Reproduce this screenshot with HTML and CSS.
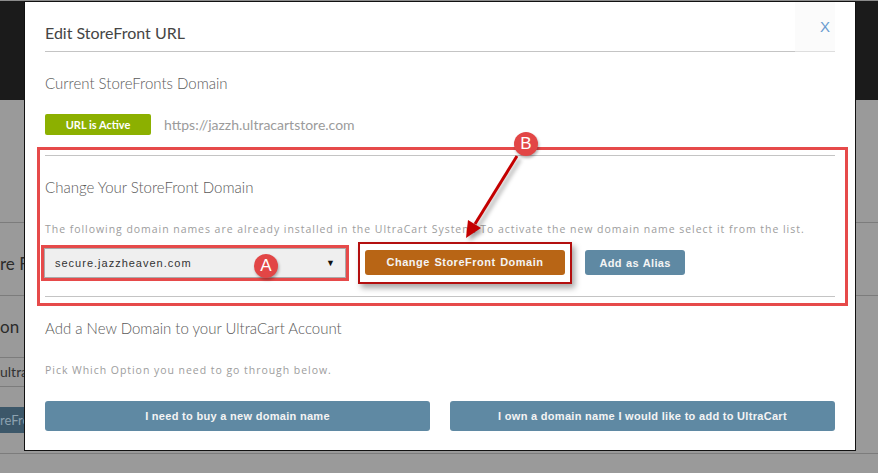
FILE: index.html
```html
<!DOCTYPE html>
<html lang="en">
<head>
    <meta charset="UTF-8">
    <meta name="viewport" content="width=device-width, initial-scale=1.0">
    <link rel="stylesheet" href="styles.css">
    <title>Edit StoreFront URL</title>
</head>
<body>
    <!-- page behind the dialog -->
    <div class="page">
        <div class="topbar"></div>
        <div class="row row-top"></div>
        <div class="row row-label"><span>re F</span></div>
        <div class="row row-title"><span>on</span></div>
        <div class="row row-input"><span class="fake-input">ultra</span></div>
        <div class="row row-action"><span class="fake-btn">reFro</span></div>
    </div>

    <div class="modal">
        <div class="modal-header">
            <h2 class="modal-title">Edit StoreFront URL</h2>
            <button class="close">X</button>
        </div>

        <div class="section">
            <h3>Current StoreFronts Domain</h3>
            <div class="url-row">
                <span class="status">URL is Active</span>
                <span class="url">https://jazzh.ultracartstore.com</span>
            </div>
        </div>

        <div class="highlight">
            <div class="section change">
                <h3>Change Your StoreFront Domain</h3>
                <p class="hint">The following domain names are already installed in the UltraCart System. To activate the new domain name select it from the list.</p>
                <div class="domain-row">
                    <div class="mark mark-a">
                        <div class="select">
                            <span>secure.jazzheaven.com</span>
                            <span class="caret">&#9660;</span>
                        </div>
                        <span class="pin pin-a">A</span>
                    </div>
                    <div class="mark mark-b">
                        <button class="btn btn-orange">Change StoreFront Domain</button>
                    </div>
                    <button class="btn btn-blue btn-alias">Add as Alias</button>
                </div>
            </div>
        </div>

        <div class="section">
            <h3 class="tight">Add a New Domain to your UltraCart Account</h3>
            <p class="hint">Pick Which Option you need to go through below.</p>
            <div class="choice-row">
                <button class="btn btn-blue btn-wide">I need to buy a new domain name</button>
                <button class="btn btn-blue btn-wide">I own a domain name I would like to add to UltraCart</button>
            </div>
        </div>
    </div>

    <!-- annotation callout -->
    <span class="pin pin-b">B</span>
    <svg class="arrow" width="878" height="473" viewBox="0 0 878 473">
        <line x1="517" y1="156" x2="475" y2="224" stroke="#c40000" stroke-width="3"/>
        <polygon points="466,238 481,228 468,220" fill="#c40000"/>
    </svg>
</body>
</html>
```

FILE: styles.css
```css
body {
    margin: 0;
    width: 878px;
    height: 473px;
    overflow: hidden;
    position: relative;
    background-color: #9a9a9a;
    font-family: Lato, "Open Sans", sans-serif;
}

/* background page */
.page {
    display: flex;
    flex-direction: column;
}

.topbar {
    height: 99px;
    background-color: #1b1b1b;
    border-top: 1px solid #8c8c8c;
}

.row {
    border-bottom: 1px solid #7c7c7c;
    display: flex;
    align-items: center;
    font-size: 17px;
    color: #2b2b2b;
    white-space: nowrap;
}

.row-top {
    height: 122px;
}

.row-label {
    height: 73px;
    padding-top: 8px;
    box-sizing: border-box;
}

.row-title {
    height: 61px;
    border-bottom: none;
}

.row-input {
    height: 30px;
    border-bottom: none;
}

.fake-input {
    height: 28px;
    line-height: 28px;
    border-top: 1px solid #7c7c7c;
    border-bottom: 1px solid #7c7c7c;
    font-size: 14px;
    color: #333;
}

.row-action {
    height: 66px;
    align-items: flex-start;
}

.fake-btn {
    margin-top: 20px;
    height: 26px;
    line-height: 26px;
    padding-right: 10px;
    background-color: #3c5769;
    color: #8da2b0;
    font-size: 13px;
}

/* dialog */
.modal {
    position: absolute;
    left: 24px;
    top: 1px;
    width: 790px;
    padding: 0 20px 19px;
    background-color: #fff;
    border: 1px solid #111;
}

.modal-header {
    display: flex;
}

.modal-title {
    flex: 1;
    margin: 0;
    padding: 20px 0 7px;
    line-height: 22px;
    font-size: 16px;
    font-weight: normal;
    color: #454545;
    border-bottom: 1px solid #c4c4c4;
}

.close {
    width: 40px;
    padding: 0 5px 0 0;
    text-align: right;
    border: none;
    border-bottom: 1px solid #dedede;
    background-color: #fbfbfb;
    color: #6a9bd0;
    font-family: "Liberation Sans", Arial, sans-serif;
    font-size: 15px;
}

h3 {
    margin: 21px 0 0;
    line-height: 20px;
    font-size: 15px;
    font-weight: 300;
    color: #5a5a5a;
}

h3.tight {
    margin-top: 12px;
}

.url-row {
    margin-top: 21px;
    display: flex;
    align-items: center;
}

.status {
    width: 106px;
    height: 21px;
    line-height: 21px;
    text-align: center;
    border-radius: 2px;
    background-color: #8cb000;
    color: #fff;
    font-size: 11px;
    font-weight: bold;
}

.url {
    margin-left: 13px;
    font-size: 14px;
    color: #9b9b9b;
}

.hint {
    margin: 24px 0 0;
    line-height: 16px;
    font-family: "Open Sans", sans-serif;
    font-size: 10.5px;
    letter-spacing: 0.96px;
    color: #9d9d9d;
}

/* red annotation frame */
.highlight {
    margin: 12px -13px 0 -8px;
    padding: 5px 10px 6px 5px;
    border: 3px solid #e64a4a;
}

.change {
    border-top: 1px solid #c4c4c4;
    border-bottom: 1px solid #c4c4c4;
    padding-bottom: 12px;
}

.domain-row {
    margin-top: 4px;
    display: flex;
    align-items: center;
    height: 43px;
}

.mark {
    position: relative;
}

.mark-a {
    margin-left: -4px;
    border: 3px solid #e64a4a;
}

.select {
    width: 302px;
    height: 30px;
    box-sizing: border-box;
    padding: 0 10px;
    display: flex;
    align-items: center;
    justify-content: space-between;
    background-color: #efefef;
    border: 1px solid #aaa;
    font-family: "Liberation Sans", Arial, sans-serif;
    font-size: 11px;
    letter-spacing: 1px;
    color: #333;
}

.caret {
    font-size: 9px;
    letter-spacing: 0;
    color: #111;
}

.pin {
    position: absolute;
    width: 24px;
    height: 24px;
    line-height: 24px;
    border-radius: 50%;
    text-align: center;
    background-color: #e24646;
    color: #fff;
    font-family: "Liberation Sans", Arial, sans-serif;
    font-size: 17px;
    box-shadow: 1px 2px 3px rgba(0, 0, 0, 0.3);
}

.pin-a {
    left: 210px;
    top: 6px;
}

.pin-b {
    left: 514px;
    top: 132px;
}

.mark-b {
    margin-left: 9px;
    padding: 6px 5px 7px;
    border: 2px solid #b30f0f;
    box-shadow: 3px 4px 6px rgba(0, 0, 0, 0.35);
}

.btn {
    display: block;
    height: 25px;
    border: none;
    border-radius: 3px;
    color: #f4f4f4;
    font-family: "Liberation Sans", Arial, sans-serif;
    font-size: 11px;
    font-weight: bold;
    letter-spacing: 0.5px;
    word-spacing: 1px;
    cursor: pointer;
}

.btn-orange {
    width: 200px;
    background-color: #b86515;
}

.btn-blue {
    background-color: #5f89a3;
}

.btn-alias {
    width: 100px;
    margin-left: 13px;
    letter-spacing: 0.3px;
}

.choice-row {
    margin-top: 23px;
    display: flex;
    gap: 20px;
}

.btn-wide {
    flex: 1;
    height: 30px;
    letter-spacing: 0.3px;
    word-spacing: 0;
}

.arrow {
    position: absolute;
    left: 0;
    top: 0;
    pointer-events: none;
    filter: drop-shadow(3px 3px 2px rgba(0, 0, 0, 0.35));
}
```
